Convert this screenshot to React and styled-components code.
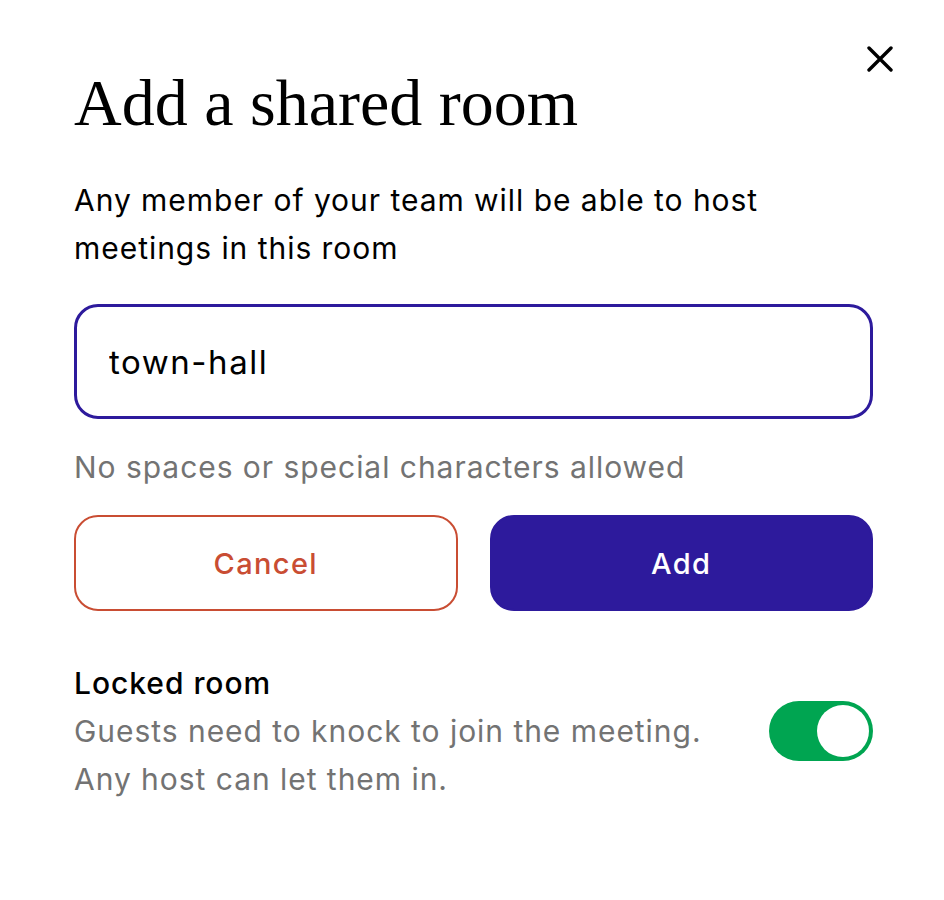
import styled, { createGlobalStyle } from "styled-components"

const GlobalStyle = createGlobalStyle`
    body {
        margin: 0;
        background: #fff;
        font-family: Inter, "Noto Sans", sans-serif;
        letter-spacing: 0.06em;
        color: #000;
    }
`

const purple = "#2d1a9c"

const App = () => {
    return (
        <>
            <GlobalStyle />
            <Dialog>
                <CloseButton aria-label="Close">
                    <svg width="26" height="26" viewBox="0 0 26 26" fill="none">
                        <path d="M2 2L24 24M24 2L2 24" stroke="#000" strokeWidth="3.4" strokeLinecap="round" />
                    </svg>
                </CloseButton>
                <Title>Add a shared room</Title>
                <Description>
                    Any member of your team will be able to host meetings in this room
                </Description>
                <Input defaultValue="town-hall" />
                <Hint>No spaces or special characters allowed</Hint>
                <Buttons>
                    <Button variant="outline">Cancel</Button>
                    <Button variant="primary">Add</Button>
                </Buttons>
                <Setting>
                    <SettingText>
                        <SettingLabel>Locked room</SettingLabel>
                        <Hint>Guests need to knock to join the meeting. Any host can let them in.</Hint>
                    </SettingText>
                    <Toggle on>
                        <Knob />
                    </Toggle>
                </Setting>
            </Dialog>
        </>
    )
}

const Dialog = styled.div`
    position: relative;
    width: 799px;
    padding: 65px 71px 80px 74px;
    display: flex;
    flex-direction: column;
`

const CloseButton = styled.button`
    position: absolute;
    top: 46px;
    right: 51px;
    padding: 0;
    border: none;
    background: transparent;
    display: flex;
    cursor: pointer;
`

const Title = styled.h1`
    margin: 0;
    font-family: "Liberation Serif", "Times New Roman", serif;
    font-weight: 400;
    font-size: 66px;
    line-height: 76px;
    letter-spacing: 0;
`

const Description = styled.p`
    margin: 35px 0 0;
    font-size: 30px;
    line-height: 48px;
`

const Input = styled.input`
    margin-top: 32px;
    box-sizing: border-box;
    width: 100%;
    height: 115px;
    border: 3px solid ${purple};
    border-radius: 24px;
    padding: 0 32px;
    font-family: Inter, sans-serif;
    font-size: 33px;
    letter-spacing: 0.047em;
    color: #000;
    outline: none;
`

const Hint = styled.p`
    margin: 24px 0 0;
    font-size: 30px;
    line-height: 48px;
    color: #737373;
`

const Buttons = styled.div`
    margin-top: 24px;
    display: grid;
    grid-template-columns: 1fr 1fr;
    gap: 32px;
`

const Button = styled.button`
    height: 96px;
    border-radius: 24px;
    font-family: Inter, sans-serif;
    font-size: 29px;
    font-weight: 500;
    letter-spacing: 0.047em;
    cursor: pointer;
    border: 2px solid ${(p) => (p.variant === "primary" ? purple : "#c94d33")};
    background: ${(p) => (p.variant === "primary" ? purple : "#fff")};
    color: ${(p) => (p.variant === "primary" ? "#fff" : "#c94d33")};
`

const Setting = styled.div`
    margin-top: 48px;
    display: flex;
    align-items: center;
    justify-content: space-between;
`

const SettingText = styled.div`
    max-width: 660px;
    ${Hint} {
        margin: 0;
    }
`

const SettingLabel = styled.div`
    font-size: 30px;
    line-height: 48px;
    font-weight: 500;
`

const Toggle = styled.div`
    box-sizing: border-box;
    width: 104px;
    height: 60px;
    border-radius: 30px;
    background: ${(p) => (p.on ? "#00a551" : "#ccc")};
    padding: 4px;
    display: flex;
    justify-content: ${(p) => (p.on ? "flex-end" : "flex-start")};
`

const Knob = styled.div`
    width: 52px;
    height: 52px;
    border-radius: 50%;
    background: #fff;
`

export default App
